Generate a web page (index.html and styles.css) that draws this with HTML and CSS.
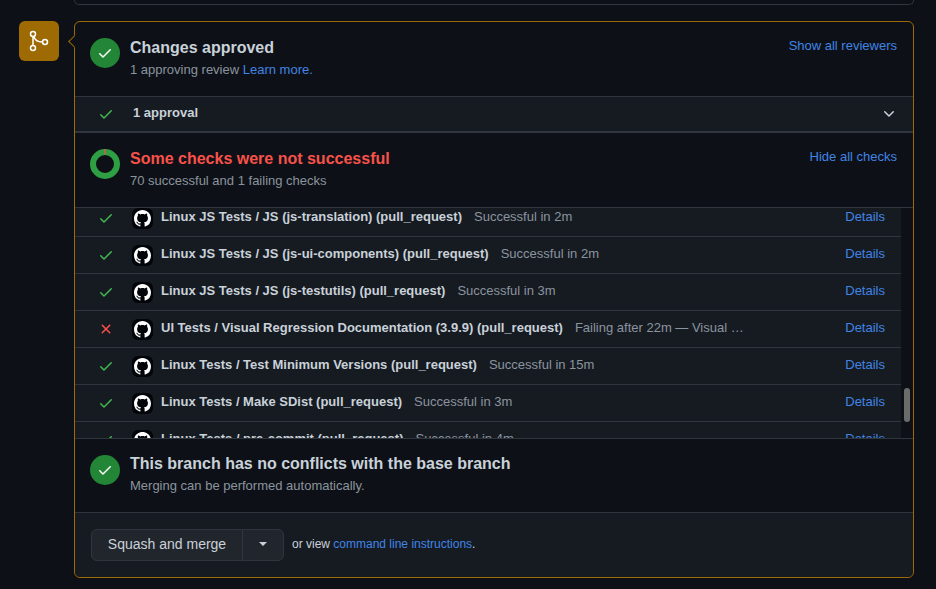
FILE: index.html
```html
<!DOCTYPE html>
<html lang="en">
<head>
    <meta charset="UTF-8">
    <title>Merge status</title>
    <link rel="stylesheet" href="styles.css">
</head>
<body>
    <svg class="icon-defs">
        <symbol id="i-check" viewBox="0 0 16 16"><path d="M13.78 4.22a.75.75 0 0 1 0 1.06l-7.25 7.25a.75.75 0 0 1-1.06 0L2.22 9.28a.751.751 0 0 1 .018-1.042.751.751 0 0 1 1.042-.018L6 10.94l6.72-6.72a.75.75 0 0 1 1.06 0Z"/></symbol>
        <symbol id="i-x" viewBox="0 0 16 16"><path d="M3.72 3.72a.75.75 0 0 1 1.06 0L8 6.94l3.22-3.22a.749.749 0 0 1 1.275.326.749.749 0 0 1-.215.734L9.06 8l3.22 3.22a.749.749 0 0 1-.326 1.275.749.749 0 0 1-.734-.215L8 9.06l-3.22 3.22a.751.751 0 0 1-1.042-.018.751.751 0 0 1-.018-1.042L6.94 8 3.72 4.78a.75.75 0 0 1 0-1.06Z"/></symbol>
        <symbol id="i-github" viewBox="0 0 16 16"><path d="M8 0c4.42 0 8 3.58 8 8a8.013 8.013 0 0 1-5.45 7.59c-.4.08-.55-.17-.55-.38 0-.27.01-1.13.01-2.2 0-.75-.25-1.23-.54-1.48 1.78-.2 3.65-.88 3.65-3.95 0-.88-.31-1.59-.82-2.15.08-.2.36-1.02-.08-2.12 0 0-.67-.22-2.2.82-.64-.18-1.32-.27-2-.27-.68 0-1.36.09-2 .27-1.53-1.03-2.2-.82-2.2-.82-.44 1.1-.16 1.92-.08 2.12-.51.56-.82 1.28-.82 2.15 0 3.06 1.86 3.75 3.64 3.95-.23.2-.44.55-.51 1.07-.46.21-1.61.55-2.33-.66-.15-.24-.6-.83-1.23-.82-.67.01-.27.38.01.53.34.19.73.9.82 1.13.16.45.68 1.31 2.69.94 0 .67.01 1.3.01 1.49 0 .21-.15.45-.55.38A7.995 7.995 0 0 1 0 8c0-4.42 3.58-8 8-8Z"/></symbol>
    </svg>

    <div class="prev-box"></div>

    <div class="merge-row">
        <div class="merge-badge">
            <svg width="24" height="24" viewBox="0 0 24 24" fill="none" stroke="#fff" stroke-width="1.5">
                <circle cx="6" cy="5" r="2.5"/>
                <circle cx="6" cy="19" r="2.5"/>
                <circle cx="18" cy="13" r="2.5"/>
                <path d="M6 7.5v9M6.8 7.4c.8 3.4 3.6 5.6 8.7 5.6"/>
            </svg>
        </div>

        <div class="merge-panel">
            <div class="section">
                <div class="status-circle"><svg width="16" height="16"><use href="#i-check"/></svg></div>
                <div class="section-text">
                    <h3>Changes approved</h3>
                    <p>1 approving review <a href="#">Learn more.</a></p>
                </div>
                <a href="#" class="section-link">Show all reviewers</a>
            </div>

            <div class="approvals">
                <svg class="ok" width="16" height="16"><use href="#i-check"/></svg>
                <span class="approvals-label">1 approval</span>
                <svg class="chevron" width="16" height="16" viewBox="0 0 16 16"><path d="M12.78 5.22a.749.749 0 0 1 0 1.06l-4.25 4.25a.749.749 0 0 1-1.06 0L3.22 6.28a.749.749 0 1 1 1.06-1.06L8 8.939l3.72-3.719a.749.749 0 0 1 1.06 0Z"/></svg>
            </div>

            <div class="section">
                <svg class="donut" width="30" height="30" viewBox="0 0 30 30">
                    <circle cx="15" cy="15" r="12" fill="none" stroke="#2ea043" stroke-width="6"/>
                    <rect x="14.4" y="0" width="1.2" height="5.5" fill="#f85149"/>
                </svg>
                <div class="section-text">
                    <h3 class="failed">Some checks were not successful</h3>
                    <p>70 successful and 1 failing checks</p>
                </div>
                <a href="#" class="section-link">Hide all checks</a>
            </div>

            <div class="checks">
                <div class="checks-scroll">
                    <div class="check-row">
                        <svg class="ok" width="16" height="16"><use href="#i-check"/></svg>
                        <span class="app-icon"><svg width="17" height="17"><use href="#i-github"/></svg></span>
                        <span class="check-name">Linux JS Tests / JS (js-translation) (pull_request)</span>
                        <span class="check-desc">Successful in 2m</span>
                        <a href="#" class="check-details">Details</a>
                    </div>
                    <div class="check-row">
                        <svg class="ok" width="16" height="16"><use href="#i-check"/></svg>
                        <span class="app-icon"><svg width="17" height="17"><use href="#i-github"/></svg></span>
                        <span class="check-name">Linux JS Tests / JS (js-ui-components) (pull_request)</span>
                        <span class="check-desc">Successful in 2m</span>
                        <a href="#" class="check-details">Details</a>
                    </div>
                    <div class="check-row">
                        <svg class="ok" width="16" height="16"><use href="#i-check"/></svg>
                        <span class="app-icon"><svg width="17" height="17"><use href="#i-github"/></svg></span>
                        <span class="check-name">Linux JS Tests / JS (js-testutils) (pull_request)</span>
                        <span class="check-desc">Successful in 3m</span>
                        <a href="#" class="check-details">Details</a>
                    </div>
                    <div class="check-row">
                        <svg class="bad" width="16" height="16"><use href="#i-x"/></svg>
                        <span class="app-icon"><svg width="17" height="17"><use href="#i-github"/></svg></span>
                        <span class="check-name">UI Tests / Visual Regression Documentation (3.9.9) (pull_request)</span>
                        <span class="check-desc">Failing after 22m — Visual …</span>
                        <a href="#" class="check-details">Details</a>
                    </div>
                    <div class="check-row">
                        <svg class="ok" width="16" height="16"><use href="#i-check"/></svg>
                        <span class="app-icon"><svg width="17" height="17"><use href="#i-github"/></svg></span>
                        <span class="check-name">Linux Tests / Test Minimum Versions (pull_request)</span>
                        <span class="check-desc">Successful in 15m</span>
                        <a href="#" class="check-details">Details</a>
                    </div>
                    <div class="check-row">
                        <svg class="ok" width="16" height="16"><use href="#i-check"/></svg>
                        <span class="app-icon"><svg width="17" height="17"><use href="#i-github"/></svg></span>
                        <span class="check-name">Linux Tests / Make SDist (pull_request)</span>
                        <span class="check-desc">Successful in 3m</span>
                        <a href="#" class="check-details">Details</a>
                    </div>
                    <div class="check-row">
                        <svg class="ok" width="16" height="16"><use href="#i-check"/></svg>
                        <span class="app-icon"><svg width="17" height="17"><use href="#i-github"/></svg></span>
                        <span class="check-name">Linux Tests / pre-commit (pull_request)</span>
                        <span class="check-desc">Successful in 4m</span>
                        <a href="#" class="check-details">Details</a>
                    </div>
                </div>
                <div class="scroll-track"><div class="scroll-thumb"></div></div>
            </div>

            <div class="section section-branch">
                <div class="status-circle"><svg width="16" height="16"><use href="#i-check"/></svg></div>
                <div class="section-text">
                    <h3>This branch has no conflicts with the base branch</h3>
                    <p>Merging can be performed automatically.</p>
                </div>
            </div>

            <div class="merge-footer">
                <div class="btn-group">
                    <button class="btn-main">Squash and merge</button>
                    <button class="btn-caret"><span class="caret"></span></button>
                </div>
                <span class="footer-note">or view <a href="#">command line instructions</a>.</span>
            </div>
        </div>
    </div>
</body>
</html>
```

FILE: styles.css
```css
body {
    font-family: "Liberation Sans", Arial, sans-serif;
    font-size: 14px;
    background-color: #0d1117;
    color: #c9d1d9;
    margin: 0;
    padding: 0 22px 0 19px;
    height: 589px;
    box-sizing: border-box;
    overflow: hidden;
}
a {
    color: #4184e4;
    text-decoration: none;
}
h3, p {
    margin: 0;
}
.icon-defs {
    display: none;
}
.prev-box {
    height: 5px;
    margin-left: 55px;
    box-sizing: border-box;
    border: 1px solid #30363d;
    border-top: none;
    border-radius: 0 0 6px 6px;
    margin-bottom: 16px;
}
.merge-row {
    display: flex;
    align-items: flex-start;
    gap: 15px;
}
.merge-badge {
    width: 40px;
    height: 40px;
    flex-shrink: 0;
    background-color: #9e6a03;
    border-radius: 6px;
    display: flex;
    align-items: center;
    justify-content: center;
}
.merge-panel {
    flex-grow: 1;
    position: relative;
    border: 1px solid #9e6a03;
    border-radius: 6px;
}
.merge-panel::before {
    content: "";
    position: absolute;
    left: -5px;
    top: 15px;
    width: 8px;
    height: 8px;
    background-color: #0d1117;
    border-left: 1px solid #9e6a03;
    border-bottom: 1px solid #9e6a03;
    transform: rotate(45deg);
}
.section {
    display: flex;
    align-items: flex-start;
    height: 74px;
    box-sizing: border-box;
    padding: 15px 16px 0 15px;
}
.section-branch {
    height: 73px;
    padding-top: 14px;
}
.status-circle {
    width: 30px;
    height: 30px;
    margin-top: 1px;
    flex-shrink: 0;
    border-radius: 50%;
    background-color: #238636;
    display: flex;
    align-items: center;
    justify-content: center;
    fill: #fff;
}
.section-branch .status-circle {
    margin-top: 2px;
}
.donut {
    flex-shrink: 0;
    margin-top: 1px;
}
.section-text {
    margin-left: 10px;
    flex-grow: 1;
}
.section-text h3 {
    font-size: 16px;
    line-height: 22px;
    font-weight: 700;
}
.section-text h3.failed {
    color: #f85149;
}
.section-text p {
    font-size: 13px;
    line-height: 20px;
    margin-top: 1px;
    color: #8b949e;
}
.section-link {
    font-size: 13px;
    line-height: 18px;
}
.approvals {
    display: flex;
    align-items: center;
    height: 37px;
    box-sizing: border-box;
    padding: 0 16px 0 23px;
    background-color: #161b22;
    border-top: 1px solid #30363d;
    border-bottom: 2px solid #30363d;
}
.approvals-label {
    margin-left: 19px;
    padding-bottom: 4px;
    font-size: 13px;
    font-weight: 700;
    flex-grow: 1;
}
.chevron {
    fill: #c9d1d9;
}
.ok {
    fill: #3fb950;
    flex-shrink: 0;
}
.bad {
    fill: #f85149;
    flex-shrink: 0;
}
.checks {
    display: flex;
    height: 232px;
    box-sizing: border-box;
    border-top: 1px solid #30363d;
    border-bottom: 1px solid #30363d;
    overflow: hidden;
}
.checks-scroll {
    flex-grow: 1;
    background-color: #161b22;
    overflow: hidden;
}
.check-row {
    display: flex;
    align-items: center;
    height: 37px;
    box-sizing: border-box;
    padding: 0 16px 0 23px;
    border-bottom: 1px solid #30363d;
}
.check-row:first-child {
    margin-top: -8px;
}
.app-icon {
    width: 21px;
    height: 21px;
    margin-left: 18px;
    flex-shrink: 0;
    background-color: #010409;
    border-radius: 6px;
    display: flex;
    align-items: center;
    justify-content: center;
    fill: #fff;
}
.check-name {
    margin-left: 8px;
    font-size: 13px;
    font-weight: 700;
    padding-bottom: 4px;
    white-space: nowrap;
}
.check-desc {
    margin-left: 12px;
    font-size: 13px;
    color: #8b949e;
    padding-bottom: 4px;
    white-space: nowrap;
}
.check-details {
    margin-left: auto;
    font-size: 13px;
    padding-bottom: 4px;
}
.scroll-track {
    width: 12px;
    flex-shrink: 0;
    padding-top: 180px;
    box-sizing: border-box;
    background-color: #0d1117;
}
.scroll-thumb {
    width: 6px;
    height: 34px;
    margin-left: 3px;
    border-radius: 3px;
    background-color: #6b6b6b;
}
.merge-footer {
    display: flex;
    align-items: center;
    height: 65px;
    box-sizing: border-box;
    padding: 0 16px 1px;
    background-color: #161b22;
    border-top: 1px solid #30363d;
    border-radius: 0 0 6px 6px;
}
.btn-group {
    display: flex;
    height: 32px;
}
.btn-group button {
    font-family: inherit;
    font-size: 14px;
    color: #c9d1d9;
    background-color: #21262d;
    border: 1px solid #30363d;
    padding: 0 0 2px;
}
.btn-main {
    width: 152px;
    border-radius: 6px 0 0 6px;
}
.btn-caret {
    width: 42px;
    margin-left: -1px;
    border-radius: 0 6px 6px 0;
    display: flex;
    align-items: center;
    justify-content: center;
}
.caret {
    border-top: 4px solid #c9d1d9;
    border-left: 4px solid transparent;
    border-right: 4px solid transparent;
}
.footer-note {
    margin-left: 8px;
    padding-bottom: 2px;
    font-size: 12px;
}
```
